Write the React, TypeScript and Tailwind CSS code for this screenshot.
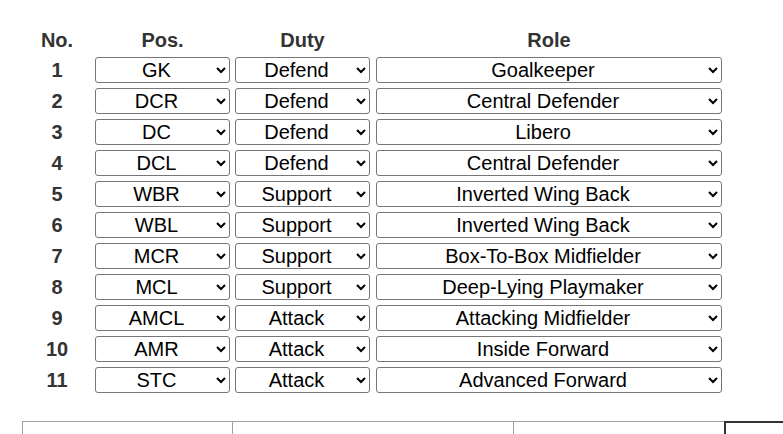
import React from "react";

const rows: [number, string, string, string][] = [
  [1, "GK", "Defend", "Goalkeeper"],
  [2, "DCR", "Defend", "Central Defender"],
  [3, "DC", "Defend", "Libero"],
  [4, "DCL", "Defend", "Central Defender"],
  [5, "WBR", "Support", "Inverted Wing Back"],
  [6, "WBL", "Support", "Inverted Wing Back"],
  [7, "MCR", "Support", "Box-To-Box Midfielder"],
  [8, "MCL", "Support", "Deep-Lying Playmaker"],
  [9, "AMCL", "Attack", "Attacking Midfielder"],
  [10, "AMR", "Attack", "Inside Forward"],
  [11, "STC", "Attack", "Advanced Forward"],
];

const selCls =
  "h-[26px] border border-[#767676] rounded-[3px] bg-white text-black text-[20px] leading-[22px] pt-0 pb-[1px] px-[2px] [text-align-last:center] text-center [font-family:'Liberation_Sans',Arial,sans-serif]";

export default function App() {
  return (
    <div className="w-[783px] h-[434px] bg-white overflow-hidden [font-family:'Liberation_Sans',Arial,sans-serif]">
      <div className="pl-[22px] pt-[27px] flex flex-col">
        <div className="flex h-[26px] items-center font-bold text-[20px] text-[#333]">
          <div className="w-[70px] text-center">No.</div>
          <div className="w-[135px] ml-[3px] text-center">Pos.</div>
          <div className="w-[135px] ml-[5px] text-center">Duty</div>
          <div className="w-[346px] ml-[6px] text-center">Role</div>
        </div>
        <div className="mt-[4px] flex flex-col gap-[5px]">
          {rows.map(([n, pos, duty, role]) => (
            <div key={n} className="flex h-[26px] items-center">
              <div className="w-[70px] text-center font-bold text-[20px] leading-[24px] text-[#333]">{n}</div>
              <select className={`${selCls} w-[135px] ml-[3px]`} defaultValue={pos}>
                <option>{pos}</option>
              </select>
              <select className={`${selCls} w-[135px] ml-[5px]`} defaultValue={duty}>
                <option>{duty}</option>
              </select>
              <select className={`${selCls} w-[346px] ml-[6px]`} defaultValue={role}>
                <option>{role}</option>
              </select>
            </div>
          ))}
        </div>
      </div>
      <div className="absolute left-0 top-[421px] w-[783px] flex pl-[22px]">
        <div className="w-[210px] h-[20px] border-t border-l border-[#a0a0a0]"></div>
        <div className="w-[281px] h-[20px] border-t border-l border-[#a0a0a0]"></div>
        <div className="w-[211px] h-[20px] border-t border-l border-[#a0a0a0]"></div>
        <div className="flex-1 h-[20px] border-t-2 border-l-2 border-[#333]"></div>
      </div>
    </div>
  );
}
